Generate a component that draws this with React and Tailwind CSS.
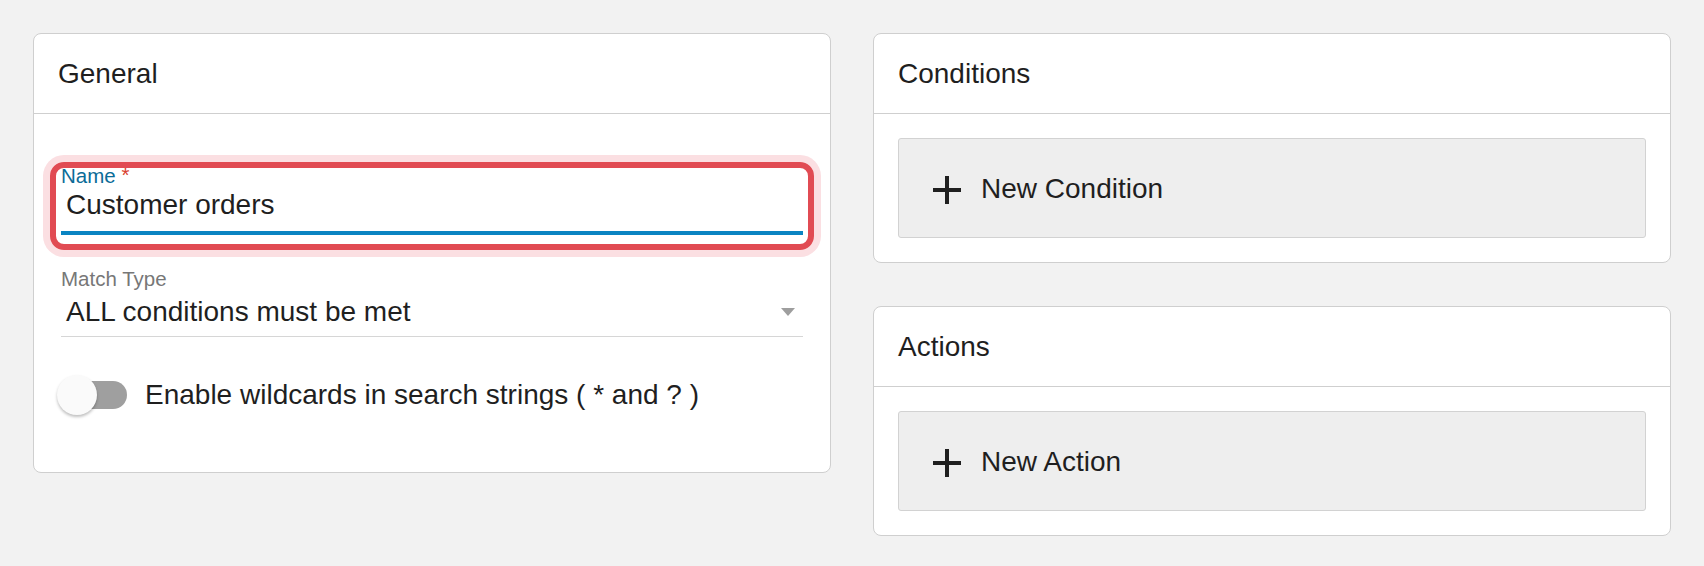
import { MdAdd } from "react-icons/md";

const font = { fontFamily: '"Liberation Sans", Arial, sans-serif' };

function Card({ title, children }) {
  return (
    <div className="bg-white border border-[#cfcfcf] rounded-[8px]">
      <div className="h-[80px] border-b border-[#cfcfcf] flex items-center pl-[24px]">
        <h2 className="text-[28px] leading-[32px] text-[#1f1f1f]">{title}</h2>
      </div>
      {children}
    </div>
  );
}

function AddButton({ label }) {
  return (
    <div className="px-[24px] pt-[24px] pb-[24px]">
      <button className="w-full h-[100px] bg-[#eeeeee] border border-[#d2d2d2] rounded-[3px] flex items-center pl-[24px] gap-[10px] text-left">
        <MdAdd size={48} className="text-[#1f1f1f] mt-[3px]" />
        <span className="text-[28px] leading-[32px] text-[#1f1f1f] mt-[1px]">{label}</span>
      </button>
    </div>
  );
}

export default function App() {
  return (
    <div style={font} className="min-h-[566px] bg-[#f2f2f2] px-[33px] pt-[33px] grid grid-cols-2 gap-x-[42px] items-start text-[#1f1f1f]">
      <Card title="General">
        <div className="px-[27px] pt-[48px] pb-[57px]">
          {/* focused name field */}
          <div className="-mx-[11px] px-[5px] border-[6px] border-[#e14b53] rounded-[14px] ring-[7px] ring-[#fbdfe2] pb-[9px]">
            <label className="block text-[20.5px] leading-[16px] text-[#0b6c98]">
              Name <span className="text-[#d9402e] relative -top-[1px]">*</span>
            </label>
            <div className="mt-[5px] pl-[5px] pb-[10px] border-b-[4px] border-[#0a84c2] text-[28px] leading-[32px]">
              Customer orders
            </div>
          </div>

          <div className="mt-[21px]">
            <label className="block text-[20.5px] leading-[16px] text-[#777]">Match Type</label>
            <div className="mt-[9px] pl-[5px] pb-[8px] border-b border-[#d6d6d6] flex items-center justify-between">
              <span className="text-[28px] leading-[32px]">ALL conditions must be met</span>
              <svg width="14" height="8" viewBox="0 0 14 8" className="mr-[8px]">
                <path d="M0 0h14L7 8z" fill="#9e9e9e" />
              </svg>
            </div>
          </div>

          <div className="mt-[38px] flex items-center h-[40px]">
            <div className="relative w-[66px] h-[40px] flex items-center">
              <div className="w-[66px] h-[28px] rounded-full bg-[#9f9f9f]" />
              <div className="absolute left-[-4px] top-0 w-[40px] h-[40px] rounded-full bg-[#fafafa] shadow-[0_2px_3px_rgba(0,0,0,0.25)]" />
            </div>
            <span className="ml-[18px] text-[28px] leading-[32px]">
              Enable wildcards in search strings ( * and ? )
            </span>
          </div>
        </div>
      </Card>

      <div className="flex flex-col gap-[43px]">
        <Card title="Conditions">
          <AddButton label="New Condition" />
        </Card>
        <Card title="Actions">
          <AddButton label="New Action" />
        </Card>
      </div>
    </div>
  );
}
